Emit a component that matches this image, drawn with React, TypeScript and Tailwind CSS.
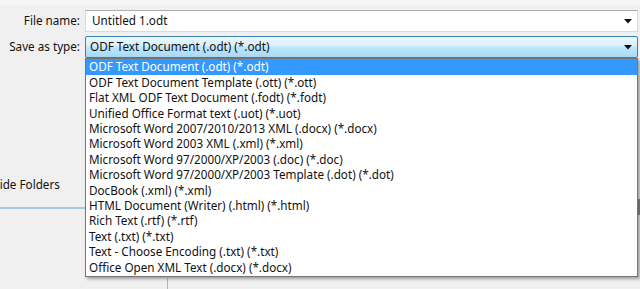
import React from "react";

const items = [
  "ODF Text Document (.odt) (*.odt)",
  "ODF Text Document Template (.ott) (*.ott)",
  "Flat XML ODF Text Document (.fodt) (*.fodt)",
  "Unified Office Format text (.uot) (*.uot)",
  "Microsoft Word 2007/2010/2013 XML (.docx) (*.docx)",
  "Microsoft Word 2003 XML (.xml) (*.xml)",
  "Microsoft Word 97/2000/XP/2003 (.doc) (*.doc)",
  "Microsoft Word 97/2000/XP/2003 Template (.dot) (*.dot)",
  "DocBook (.xml) (*.xml)",
  "HTML Document (Writer) (.html) (*.html)",
  "Rich Text (.rtf) (*.rtf)",
  "Text (.txt) (*.txt)",
  "Text - Choose Encoding (.txt) (*.txt)",
  "Office Open XML Text (.docx) (*.docx)",
];

function Arrow() {
  return (
    <svg width="8" height="5" viewBox="0 0 8 5" className="shrink-0">
      <path d="M0 0 L8 0 L4 4.5 Z" fill="#111" />
    </svg>
  );
}

export default function App() {
  return (
    <div
      className="relative w-[640px] h-[289px] overflow-hidden bg-[#f0f0f0] text-[11.7px] text-[#111]"
      style={{ fontFamily: '"Noto Sans", "Open Sans", sans-serif' }}
    >
      <div className="h-[5px] bg-[#f6f6f6]" />
      {/* File name row */}
      <div className="mt-[5px] flex items-center h-[22px]">
        <div className="w-[85px] pr-[5px] text-right leading-none">File name:</div>
        <div className="w-[553px] h-[22px] bg-white border border-[#d5dbe2] border-t-[#abadb3] flex items-center pl-[6px] pr-[5px]">
          <span className="flex-1 leading-none">Untitled 1.odt</span>
          <Arrow />
        </div>
      </div>
      {/* Save as type row */}
      <div className="mt-[4px] flex items-center h-[22px]">
        <div className="w-[85px] pr-[5px] text-right leading-none">Save as type:</div>
        <div className="w-[553px] h-[22px] border border-[#3c7fb1] rounded-[2px] flex items-center pl-[4px] pr-[5px] bg-[linear-gradient(to_bottom,#eaf6fd_0%,#d9f0fc_45%,#bee6fd_50%,#a7d9f5_100%)]">
          <span className="flex-1 leading-none">ODF Text Document (.odt) (*.odt)</span>
          <Arrow />
        </div>
      </div>

      {/* background content */}
      <div className="mt-[119px] h-[16px] flex items-center leading-none whitespace-nowrap">
        <span className="-ml-[9px]">Hide Folders</span>
      </div>
      <div className="mt-[14px] w-[90px] h-[2px] bg-[#a9c8de]" />
      <div className="flex">
        <div className="ml-[167px] mt-[69px] w-[1px] h-[20px] bg-[#b5b5b5]" />
      </div>
      <div className="absolute right-0 top-[199px] w-[3px] h-[16px] bg-[#7d8ea0]" />

      {/* dropdown popup */}
      <div className="absolute left-[85px] top-[58px] w-[553px] bg-white border border-[#767676] shadow-[2px_2px_3px_rgba(0,0,0,0.35)] pb-[1px]">
        {items.map((t, i) => (
          <div
            key={t}
            className={
              i === 0
                ? "h-[16px] bg-[#3399ff] text-white pl-[3px] flex items-center leading-none whitespace-nowrap"
                : "h-[15.4px] pl-[3px] flex items-center leading-none whitespace-nowrap"
            }
          >
            {t}
          </div>
        ))}
      </div>
    </div>
  );
}
